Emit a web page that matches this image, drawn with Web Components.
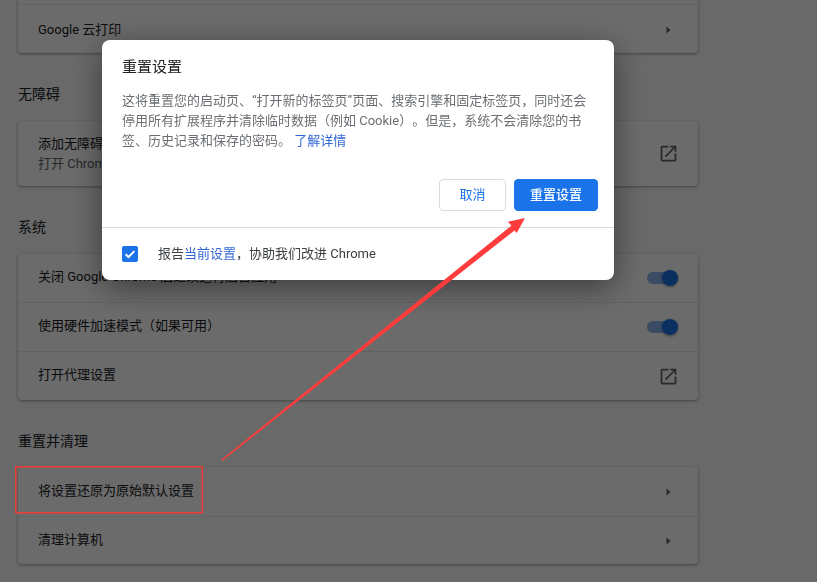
<!DOCTYPE html>
<html lang="zh-CN">
<head>
<meta charset="utf-8">
<title>重置设置</title>
<style>
  html, body { margin: 0; height: 100%; overflow: hidden; }
  body {
    background: #f7faf7;
    color: #202124;
    font: 13px Roboto, "Noto Sans CJK SC", sans-serif;
    text-spacing-trim: space-all;
  }
</style>
</head>
<body>
<settings-page>
  <settings-section first>
    <settings-row>
      <span></span>
    </settings-row>
    <settings-row icon="arrow" style="min-height: 46px; padding-top: 2px" flat>Google 云打印</settings-row>
  </settings-section>
  <settings-section heading="无障碍">
    <settings-row icon="external" tall flat>添加无障碍功能<span slot="sub">打开 Chrome 网上应用店</span></settings-row>
  </settings-section>
  <settings-section heading="系统">
    <settings-row icon="toggle">关闭 Google Chrome 后继续运行后台应用</settings-row>
    <settings-row icon="toggle">使用硬件加速模式（如果可用）</settings-row>
    <settings-row icon="external">打开代理设置</settings-row>
  </settings-section>
  <settings-section heading="重置并清理" tight>
    <settings-row icon="arrow" style="min-height: 49px">将设置还原为原始默认设置</settings-row>
    <settings-row icon="arrow" style="min-height: 47px">清理计算机</settings-row>
  </settings-section>
</settings-page>
<reset-dialog></reset-dialog>
<red-annotation></red-annotation>

<script>
  class SettingsPage extends HTMLElement {
    constructor() {
      super();
      this.attachShadow({ mode: "open" });
      this.shadowRoot.innerHTML = `
        <style>
          :host { display: block; width: 680px; margin: -44px 0 0 18px; }
        </style>
        <slot></slot>
      `;
    }
  }
  customElements.define("settings-page", SettingsPage);

  class SettingsSection extends HTMLElement {
    constructor() {
      super();
      this.attachShadow({ mode: "open" });
    }
    connectedCallback() {
      const heading = this.getAttribute("heading");
      this.shadowRoot.innerHTML = `
        <style>
          :host { display: block; }
          h2 {
            margin: 31px 0 17px;
            font-size: 14px;
            font-weight: 400;
            line-height: 20px;
          }
          :host([tight]) h2 { margin: 31px 0 16px; }
          .card {
            background: #fff;
            border-radius: 4px;
            box-shadow: 0 1px 2px rgba(60, 64, 67, .3), 0 1px 3px 1px rgba(60, 64, 67, .15);
          }
        </style>
        ${heading ? `<h2>${heading}</h2>` : ""}
        <div class="card"><slot></slot></div>
      `;
    }
  }
  customElements.define("settings-section", SettingsSection);

  const ICONS = {
    arrow: `<svg width="5" height="8" viewBox="0 0 5 8"><path d="M0.5 0.5 4.5 4 0.5 7.5z" fill="#5f6368"/></svg>`,
    external: `<svg width="21" height="21" viewBox="0 0 24 24"><path d="M19 19H5V5h7V3H5a2 2 0 0 0-2 2v14a2 2 0 0 0 2 2h14a2 2 0 0 0 2-2v-7h-2v7zM14 3v2h3.59l-9.83 9.83 1.41 1.41L19 6.41V10h2V3h-7z" fill="#5f6368"/></svg>`,
    toggle: `<div class="toggle"><i></i><b></b></div>`,
  };

  class SettingsRow extends HTMLElement {
    constructor() {
      super();
      this.attachShadow({ mode: "open" });
    }
    connectedCallback() {
      const icon = this.getAttribute("icon");
      this.shadowRoot.innerHTML = `
        <style>
          :host {
            display: flex;
            align-items: center;
            justify-content: space-between;
            min-height: 48px;
            padding: 0 20px;
            border-top: 1px solid #e8eaed;
            color: #202124;
          }
          :host(:first-child) { border-top: 0; }
          :host([tall]) { min-height: 65px; }
          .text { margin-bottom: 2px; }
          :host([flat]) .text { margin-bottom: 0; }
          .sub { display: block; color: #5f6368; line-height: 20px; }
          .label { line-height: 20px; }
          .end { display: flex; align-items: center; justify-content: center; width: 32px; margin-right: -6px; }
          .toggle { position: relative; flex: none; width: 31px; height: 12px; margin-right: 11px; }
          .toggle i { position: absolute; inset: 0; border-radius: 6px; background: #8ab4ee; }
          .toggle b {
            position: absolute; right: 0; top: -2px; width: 16px; height: 16px; border-radius: 50%;
            background: #1a73e8; box-shadow: 0 1px 3px rgba(0, 0, 0, .4);
          }
        </style>
        <div class="text">
          <div class="label"><slot></slot></div>
          <div class="sub"><slot name="sub"></slot></div>
        </div>
        <div class="end">${ICONS[icon] || ""}</div>
      `;
    }
  }
  customElements.define("settings-row", SettingsRow);

  class ResetDialog extends HTMLElement {
    constructor() {
      super();
      this.attachShadow({ mode: "open" });
      this.shadowRoot.innerHTML = `
        <style>
          :host {
            position: fixed;
            inset: 0;
            background: rgba(0, 0, 0, .58);
          }
          .dialog {
            position: absolute;
            left: 102px;
            top: 40px;
            width: 512px;
            height: 240px;
            box-sizing: border-box;
            padding-top: 17px;
            background: #fff;
            border-radius: 8px;
            box-shadow: 0 8px 32px rgba(0, 0, 0, .45);
            display: flex;
            flex-direction: column;
          }
          h1 {
            margin: 0 20px 14px;
            font-size: 15px;
            font-weight: 400;
            line-height: 20px;
            color: #202124;
          }
          p {
            margin: 0 20px;
            color: #6b6f73;
            line-height: 20px;
          }
          a { color: #3367d6; text-decoration: none; }
          .buttons {
            display: flex;
            justify-content: flex-end;
            gap: 8px;
            margin: 28px 16px 16px 0;
          }
          button {
            height: 32px;
            box-sizing: border-box;
            border-radius: 4px;
            border: 1px solid #dadce0;
            background: #fff;
            color: #1a73e8;
            font: inherit;
            padding: 0 0 3px;
            width: 67px;
          }
          button.primary {
            width: 84px;
            background: #1a73e8;
            border-color: #1a73e8;
            color: #fff;
            font-weight: 500;
          }
          footer {
            flex: 1;
            display: flex;
            align-items: center;
            gap: 20px;
            padding: 0 20px;
            border-top: 1px solid #dadce0;
            color: #3c4043;
          }
          footer .text { margin-bottom: 4px; }
          .check {
            display: flex;
            width: 16px;
            height: 16px;
            border-radius: 2px;
            background: #1a73e8;
          }
        </style>
        <div class="dialog">
          <h1>重置设置</h1>
          <p>这将重置您的启动页、“打开新的标签页”页面、搜索引擎和固定标签页，同时还会停用所有扩展程序并清除临时数据（例如 Cookie）。但是，系统不会清除您的书签、历史记录和保存的密码。 <a>了解详情</a></p>
          <div class="buttons">
            <button>取消</button>
            <button class="primary">重置设置</button>
          </div>
          <footer>
            <span class="check">
              <svg width="16" height="16" viewBox="0 0 16 16"><path d="M3.6 8.2 6.5 11l5.9-5.9" fill="none" stroke="#fff" stroke-width="2"/></svg>
            </span>
            <span class="text">报告<a>当前设置</a>，协助我们改进 Chrome</span>
          </footer>
        </div>
      `;
    }
  }
  customElements.define("reset-dialog", ResetDialog);

  class RedAnnotation extends HTMLElement {
    constructor() {
      super();
      this.attachShadow({ mode: "open" });
      this.shadowRoot.innerHTML = `
        <style>
          :host { position: fixed; inset: 0; pointer-events: none; }
          svg { display: block; }
        </style>
        <svg width="817" height="582" viewBox="0 0 817 582">
          <rect x="15.75" y="466.75" width="186.5" height="46" fill="none" stroke="#f03a3a" stroke-width="1.5"/>
          <path d="M525 218 507.7 221.7 511.5 225.6 221 460 222 461 514.5 230.4 516.7 233z" fill="#ff3c3c"/>
        </svg>
      `;
    }
  }
  customElements.define("red-annotation", RedAnnotation);
</script>
</body>
</html>
